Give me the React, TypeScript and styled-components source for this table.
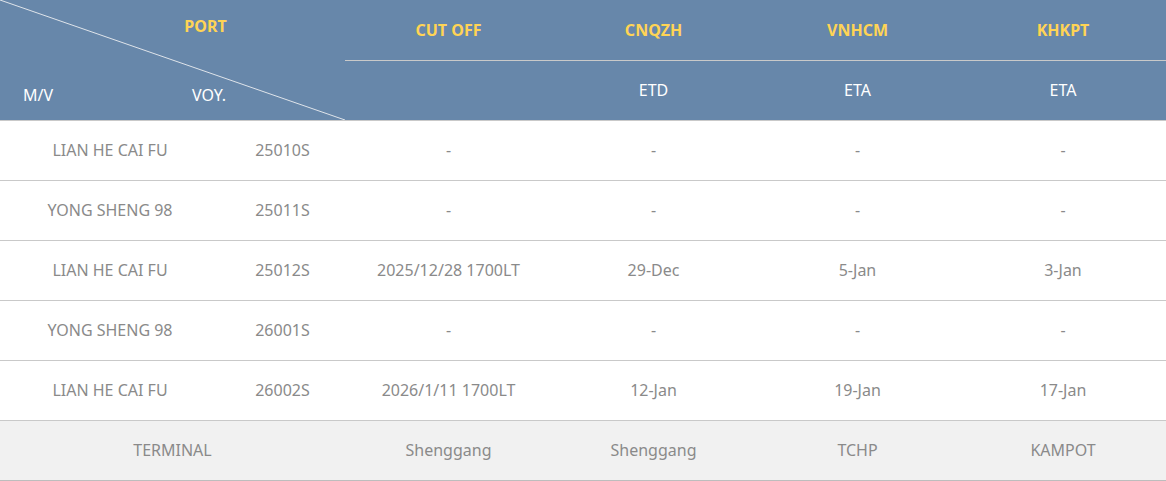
import * as React from "react";
import styled, { createGlobalStyle } from "styled-components";

type Row = {
  vessel: string;
  voyage: string;
  cutOff: string;
  etd: string;
  vnhcm: string;
  khkpt: string;
};

const rows: Row[] = [
  { vessel: "LIAN HE CAI FU", voyage: "25010S", cutOff: "-", etd: "-", vnhcm: "-", khkpt: "-" },
  { vessel: "YONG SHENG 98", voyage: "25011S", cutOff: "-", etd: "-", vnhcm: "-", khkpt: "-" },
  { vessel: "LIAN HE CAI FU", voyage: "25012S", cutOff: "2025/12/28 1700LT", etd: "29-Dec", vnhcm: "5-Jan", khkpt: "3-Jan" },
  { vessel: "YONG SHENG 98", voyage: "26001S", cutOff: "-", etd: "-", vnhcm: "-", khkpt: "-" },
  { vessel: "LIAN HE CAI FU", voyage: "26002S", cutOff: "2026/1/11 1700LT", etd: "12-Jan", vnhcm: "19-Jan", khkpt: "17-Jan" }
];

const GlobalStyle = createGlobalStyle`
  body {
    margin: 0;
    background: #fff;
    font-family: "Noto Sans", "Open Sans", sans-serif;
  }
`;

const Table = styled.table`
  width: 1166px;
  border-collapse: collapse;
  table-layout: fixed;
  font-size: 16px;
`;

const Head = styled.thead`
  background: #6787aa;
`;

const HeadRow = styled.tr<{ last?: boolean }>`
  border-bottom: ${p => (p.last ? "1px solid #c9c9c9" : "none")};
`;

const HeadCell = styled.th<{ divider?: boolean; tall?: number }>`
  height: ${p => p.tall ?? 59}px;
  padding: 0 0 1px;
  text-align: center;
  vertical-align: middle;
  font-weight: 400;
  color: #fff;
  border-bottom: ${p => (p.divider ? "1px solid #c9c9c9" : "none")};
`;

const PortLabel = styled.span`
  color: #ffd455;
  font-weight: 700;
`;

const CornerCell = styled.th`
  position: relative;
  padding: 0;
  font-weight: 400;
  color: #fff;
`;

const CornerGrid = styled.div`
  display: grid;
  grid-template-columns: 192px 153px;
  grid-template-rows: 56px 63px;
  height: 119px;
`;

const CornerPort = styled.div`
  grid-column: 1 / 3;
  display: flex;
  justify-content: center;
  padding-left: 66px;
  padding-top: 14px;
`;

const CornerLabel = styled.div<{ indent: number }>`
  padding-left: ${p => p.indent}px;
  padding-top: 27px;
  text-align: left;
`;

const Diagonal = styled.svg`
  position: absolute;
  left: 0;
  top: 0;
  pointer-events: none;
`;

const BodyRow = styled.tr<{ shaded?: boolean }>`
  background: ${p => (p.shaded ? "#f1f1f1" : "#fff")};
  border-bottom: ${p => (p.shaded ? "2px solid #bdbdbd" : "1px solid #c9c9c9")};
`;

const Cell = styled.td`
  height: 58px;
  padding: 0 0 1px;
  text-align: center;
  vertical-align: middle;
  color: #8a8a8a;
`;

export default function App() {
  return (
    <>
      <GlobalStyle />
      <Table>
        <colgroup>
          <col style={{ width: 220 }} />
          <col style={{ width: 125 }} />
          <col style={{ width: 207 }} />
          <col style={{ width: 203 }} />
          <col style={{ width: 205 }} />
          <col style={{ width: 206 }} />
        </colgroup>
        <Head>
          <HeadRow>
            <CornerCell colSpan={2} rowSpan={2}>
              <Diagonal width="345" height="120" viewBox="0 0 345 120">
                <line x1="0" y1="0" x2="345" y2="120" stroke="#dfe4ea" strokeWidth="1" />
              </Diagonal>
              <CornerGrid>
                <CornerPort>
                  <PortLabel>PORT</PortLabel>
                </CornerPort>
                <CornerLabel indent={23}>M/V</CornerLabel>
                <CornerLabel indent={0}>VOY.</CornerLabel>
              </CornerGrid>
            </CornerCell>
            <HeadCell divider>
              <PortLabel>CUT OFF</PortLabel>
            </HeadCell>
            <HeadCell divider>
              <PortLabel>CNQZH</PortLabel>
            </HeadCell>
            <HeadCell divider>
              <PortLabel>VNHCM</PortLabel>
            </HeadCell>
            <HeadCell divider>
              <PortLabel>KHKPT</PortLabel>
            </HeadCell>
          </HeadRow>
          <HeadRow last>
            <HeadCell tall={58} />
            <HeadCell tall={58}>ETD</HeadCell>
            <HeadCell tall={58}>ETA</HeadCell>
            <HeadCell tall={58}>ETA</HeadCell>
          </HeadRow>
        </Head>
        <tbody>
          {rows.map((r, i) => (
            <BodyRow key={i}>
              <Cell>{r.vessel}</Cell>
              <Cell>{r.voyage}</Cell>
              <Cell>{r.cutOff}</Cell>
              <Cell>{r.etd}</Cell>
              <Cell>{r.vnhcm}</Cell>
              <Cell>{r.khkpt}</Cell>
            </BodyRow>
          ))}
          <BodyRow shaded>
            <Cell colSpan={2}>TERMINAL</Cell>
            <Cell>Shenggang</Cell>
            <Cell>Shenggang</Cell>
            <Cell>TCHP</Cell>
            <Cell>KAMPOT</Cell>
          </BodyRow>
        </tbody>
      </Table>
    </>
  );
}
